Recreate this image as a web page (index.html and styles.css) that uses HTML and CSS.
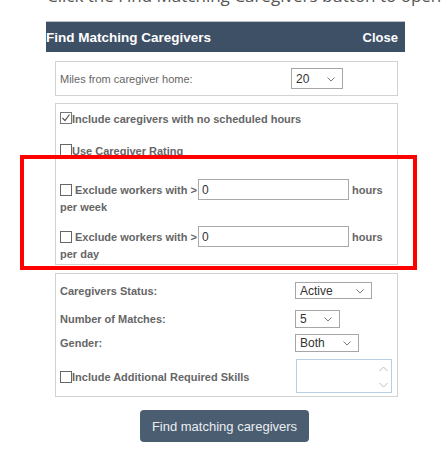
FILE: index.html
```html
<!DOCTYPE html>
<html>
<head>
<meta charset="utf-8">
<link rel="stylesheet" href="styles.css">
</head>
<body>
<div class="intro"><span>Click the Find Matching Caregivers button to open the dialog</span></div>
<div class="dialog">
  <div class="dlg-head">
    <span class="dlg-title">Find Matching Caregivers</span>
    <span class="dlg-close">Close</span>
  </div>
  <div class="dlg-body">
    <div class="box box-miles">
      <span class="lbl lbl-miles">Miles from caregiver home:</span>
      <div class="sel sel-miles"><span>20</span><svg class="chev" width="8" height="5" viewBox="0 0 8 5"><path d="M0.5 0.5 L4 4 L7.5 0.5" fill="none" stroke="#777" stroke-width="1"/></svg></div>
    </div>

    <div class="box box-opts">
      <div class="row chk-row r-include">
        <span class="cb checked"><svg width="10" height="10" viewBox="0 0 10 10"><path d="M1.5 5 L4 7.5 L8.5 1.5" fill="none" stroke="#555" stroke-width="1.2"/></svg></span>
        <span class="b">Include caregivers with no scheduled hours</span>
      </div>
      <div class="row chk-row r-rating">
        <span class="cb"></span>
        <span class="b">Use Caregiver Rating</span>
      </div>
      <div class="row ex-row r-ex1">
        <span class="cb"></span>
        <span class="b ex-lbl">Exclude workers with &gt;</span>
        <div class="txt"><span>0</span></div>
        <span class="b hrs">hours</span>
      </div>
      <div class="b wrapline">per week</div>
      <div class="row ex-row r-ex2">
        <span class="cb"></span>
        <span class="b ex-lbl">Exclude workers with &gt;</span>
        <div class="txt"><span>0</span></div>
        <span class="b hrs">hours</span>
      </div>
      <div class="b wrapline">per day</div>
    </div>

    <div class="box box-filters">
      <div class="row f-row r-status">
        <span class="b f-lbl">Caregivers Status:</span>
        <div class="sel sel-active"><span>Active</span><svg class="chev" width="8" height="5" viewBox="0 0 8 5"><path d="M0.5 0.5 L4 4 L7.5 0.5" fill="none" stroke="#777" stroke-width="1"/></svg></div>
      </div>
      <div class="row f-row r-matches">
        <span class="b f-lbl">Number of Matches:</span>
        <div class="sel sel-five"><span>5</span><svg class="chev" width="8" height="5" viewBox="0 0 8 5"><path d="M0.5 0.5 L4 4 L7.5 0.5" fill="none" stroke="#777" stroke-width="1"/></svg></div>
      </div>
      <div class="row f-row r-gender">
        <span class="b f-lbl">Gender:</span>
        <div class="sel sel-both"><span>Both</span><svg class="chev" width="8" height="5" viewBox="0 0 8 5"><path d="M0.5 0.5 L4 4 L7.5 0.5" fill="none" stroke="#777" stroke-width="1"/></svg></div>
      </div>
      <div class="row f-row r-skills">
        <div class="skills-lbl">
          <span class="cb"></span>
          <span class="b">Include Additional Required Skills</span>
        </div>
        <div class="listbox">
          <div class="lb-scroll">
            <svg width="9" height="6" viewBox="0 0 9 6"><path d="M0.5 5 L4.5 1 L8.5 5" fill="none" stroke="#bbb" stroke-width="1"/></svg>
            <svg width="9" height="6" viewBox="0 0 9 6"><path d="M0.5 1 L4.5 5 L8.5 1" fill="none" stroke="#bbb" stroke-width="1"/></svg>
          </div>
        </div>
      </div>
    </div>

    <div class="btn-wrap"><button class="find-btn">Find matching caregivers</button></div>
  </div>
</div>
<div class="highlight"></div>
</body>
</html>
```
FILE: styles.css
```css
* { box-sizing: border-box; }
html, body { margin: 0; padding: 0; background: #fff; }
body {
  font-family: "Liberation Sans", Arial, sans-serif;
  font-size: 11px;
  color: #666;
  position: relative;
  width: 443px;
  height: 463px;
  overflow: hidden;
}
.intro {
  height: 6px;
  overflow: hidden;
  display: flex;
  align-items: flex-end;
  padding-left: 47px;
  white-space: nowrap;
  font-family: "Open Sans", sans-serif;
  font-size: 17px;
  color: #555;
}
.intro span { line-height: 21px; }

.dialog {
  margin: 15px 0 0 46px;
  width: 359px;
}
.dlg-head {
  height: 31px;
  background: #3e5066;
  border-top: 1px solid #b9c0c8;
  display: flex;
  align-items: center;
  justify-content: space-between;
  padding: 0 7px 0 0;
  color: #fff;
  font-weight: bold;
  font-size: 13.5px;
}
.dlg-title { padding-top: 1px; }
.dlg-close { padding-top: 1px; font-size: 13px; }

.dlg-body { padding: 9px 0 0 9px; }

.box {
  width: 343px;
  border: 1px solid #d2d2d2;
  background: #fff;
}
.box-miles {
  height: 35px;
  display: flex;
  align-items: center;
  padding-left: 4px;
}
.lbl-miles { width: 231px; padding-top: 1px; }

.sel {
  display: flex;
  align-items: center;
  justify-content: space-between;
  border: 1px solid #a6a6a6;
  background: #fff;
  color: #333;
  font-size: 12px;
  padding: 0 7px 0 4px;
}
.sel .chev { margin-top: 1px; }
.sel-miles { width: 52px; height: 21px; }
.sel-active { width: 77px; height: 17px; }
.sel-five { width: 45px; height: 18px; }
.sel-both { width: 64px; height: 18px; }

.b { font-weight: bold; }

.box-opts {
  margin-top: 7px;
  height: 162px;
  padding: 7px 0 0 4px;
}
.row { display: flex; align-items: center; }
.chk-row { height: 16px; }
.r-rating { margin-top: 16px; }
.cb {
  width: 12px;
  height: 12px;
  border: 1px solid #666;
  background: #fff;
  display: inline-flex;
  align-items: center;
  justify-content: center;
  flex: none;
}
.chk-row .cb { margin-top: -2px; }
.cb.checked { border-color: #777; }

.ex-row { height: 21px; }
.r-ex1 { margin-top: 20px; }
.r-ex2 { margin-top: 10px; }
.ex-lbl { margin-left: 3px; width: 123px; }
.txt {
  width: 151px;
  height: 21px;
  border: 1px solid #a9a9a9;
  color: #333;
  font-size: 12px;
  display: flex;
  align-items: center;
  padding-left: 3px;
}
.hrs { margin-left: 3px; }
.wrapline { height: 16px; line-height: 15px; }

.box-filters {
  margin-top: 8px;
  height: 124px;
  padding: 8px 0 0 4px;
}
.f-row { height: 17px; }
.f-lbl { width: 235px; }
.r-matches { margin-top: 11px; height: 18px; }
.r-gender { margin-top: 6px; height: 18px; }
.r-skills { margin-top: 7px; height: 34px; }
.skills-lbl { width: 236px; display: flex; align-items: center; margin-top: 2px; }
.listbox {
  width: 96px;
  height: 34px;
  border: 1px solid #b9cde3;
  display: flex;
  justify-content: flex-end;
}
.lb-scroll {
  width: 15px;
  display: flex;
  flex-direction: column;
  justify-content: space-between;
  align-items: center;
  padding: 6px 0 4px;
}

.btn-wrap {
  margin-top: 13px;
  padding-left: 85px;
}
.find-btn {
  width: 169px;
  height: 32px;
  border: none;
  border-radius: 4px;
  background: #4b5d70;
  color: #e9edf1;
  font-family: "Liberation Sans", Arial, sans-serif;
  font-size: 13px;
  padding: 0;
  padding-top: 1px;
}

.highlight {
  position: absolute;
  left: 20px;
  top: 155px;
  width: 397px;
  height: 115px;
  border: 4px solid #f00;
}
```
